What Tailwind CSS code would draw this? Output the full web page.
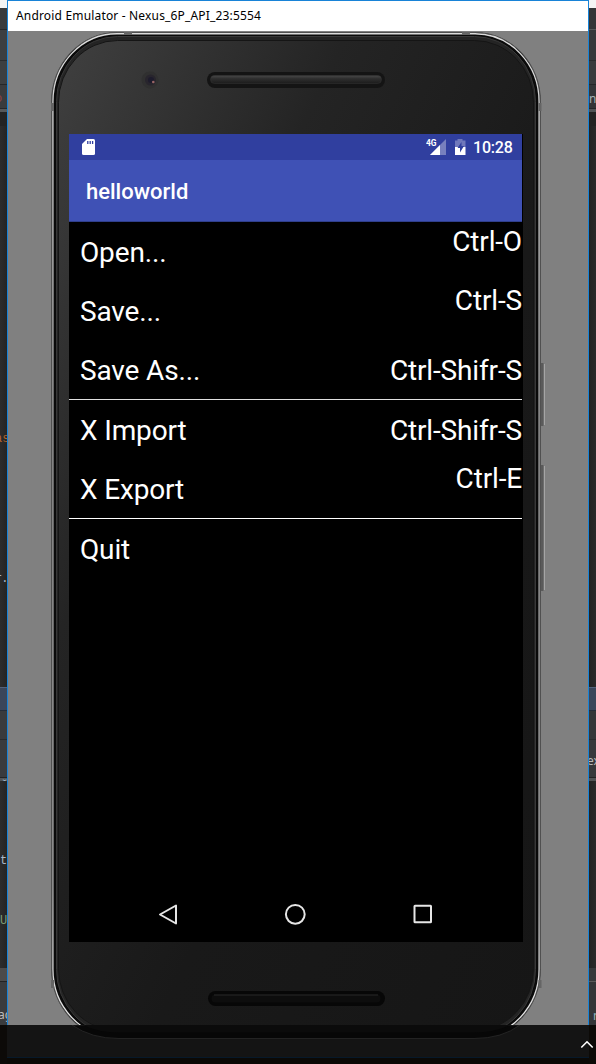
<!DOCTYPE html>
<html lang="en">
<head>
<meta charset="utf-8">
<title>Android Emulator</title>
<script src="https://cdn.jsdelivr.net/npm/@tailwindcss/browser@4"></script>
</head>
<body class="relative flex h-[1064px] w-[596px] overflow-hidden bg-[#2b2b2b] font-['Roboto',sans-serif]">
  <!-- editor strip, left -->
  <aside class="relative w-[7px] shrink-0 overflow-hidden font-['Liberation_Mono',monospace] text-[12px] leading-[14px]">
    <div class="h-2 bg-[#f5f5f5]"></div>
    <div class="h-[22px] border-b border-[#252729] bg-[#393b3d]"></div>
    <div class="h-[31px] border-b border-[#2a2c2e] bg-[#3c3f41]"></div>
    <div class="h-6 border-b border-[#252729] bg-[#3c3f41]"></div>
    <div class="h-6 border-b border-[#252729] bg-[#393b3d]"></div>
    <div class="h-[3px] bg-[#55585a]"></div>
    <div class="h-[14px] bg-[#232323]"></div>
    <div class="h-[561px] bg-gradient-to-r from-[#2c2c2c] to-[#242424]"></div>
    <div class="h-6 border-y border-t-[#52627b] border-b-[#252d39] bg-[#3a465a]"></div>
    <div class="h-[29px] border-b border-[#292b2d] bg-[#393b3d]"></div>
    <div class="h-[38px] border-b border-[#232323] bg-[#393b3d]"></div>
    <div class="h-[3px] bg-[#515658]"></div>
    <div class="h-[187px] bg-gradient-to-r from-[#2c2c2c] to-[#242424]"></div>
    <div class="h-[14px] border-b border-[#222] bg-[#4b4b4b]"></div>
    <div class="h-[82px] bg-[#393b3d]"></div>
    <span class="absolute -left-[5px] top-[92px] text-[#8f4446]">o</span>
    <span class="absolute -left-[5px] top-[432px] text-[#b5652c]">as</span>
    <span class="absolute -left-[5px] top-[572px] tracking-[-1px] text-[#a9b7c6]">r.</span>
    <span class="absolute left-px top-[779px] text-[#a9b7c6]">˘</span>
    <span class="absolute left-0 top-[854px] text-[#a9b7c6]">t</span>
    <span class="absolute left-0 top-[914px] text-[#7d9a72]">U</span>
    <span class="absolute -left-[2px] top-[1008px] font-['Noto_Sans',sans-serif] text-[#bbb]">ag</span>
  </aside>

  <!-- emulator window -->
  <main class="relative flex h-[1058px] w-[582px] shrink-0 flex-col border border-[#1883d7] bg-[#808080]">
    <header class="flex h-[30px] shrink-0 items-center bg-white pl-2 font-['Noto_Sans',sans-serif] text-[12px] text-black"><span class="whitespace-nowrap tracking-[0.17px]">Android Emulator - Nexus_6P_API_23:5554</span></header>
    <svg class="absolute left-[-8px] top-[-1px]" width="596" height="1058" viewBox="0 0 596 1058" fill="none">
      <defs>
        <linearGradient id="face" x1="0" y1="0" x2="1" y2="1" gradientUnits="objectBoundingBox">
          <stop offset="0" stop-color="#404040"/><stop offset=".3" stop-color="#242424"/><stop offset=".6" stop-color="#191919"/><stop offset="1" stop-color="#161616"/>
        </linearGradient>
        <linearGradient id="rim" x1="0" y1="32" x2="0" y2="1039" gradientUnits="userSpaceOnUse">
          <stop offset="0" stop-color="#dcdcdc"/><stop offset=".15" stop-color="#c8c8c8"/><stop offset=".4" stop-color="#a0a0a0"/><stop offset=".85" stop-color="#acacac"/><stop offset="1" stop-color="#eee"/>
        </linearGradient>
        <linearGradient id="bar" x1="0" y1="0" x2="0" y2="1">
          <stop offset="0" stop-color="#484848"/><stop offset=".4" stop-color="#2e2e2e"/><stop offset="1" stop-color="#1c1c1c"/>
        </linearGradient>
      </defs>
      <path d="M541 363h2.500v63H541zM541 465h2.500v126H541z" fill="#5a5a5a"/>
      <path d="M544.500 364v61M544.500 466v124" stroke="#a5a5a5"/>
      <rect x="51.500" y="32.500" width="489" height="1006" rx="65" ry="69" fill="#0a0a0a" stroke="#505050"/>
      <rect x="52.900" y="33.700" width="486.200" height="1003.600" rx="64" ry="68" stroke="url(#rim)" stroke-width="1.400"/>
      <rect x="56.500" y="36.500" width="479" height="998" rx="61" ry="65" fill="#242424" stroke="#383838"/>
      <rect x="58.500" y="40.500" width="475" height="990" rx="59" ry="62" fill="url(#face)" stroke="#151515"/>
      <path d="M124 33.500h8M462 33.500h8M52.500 103v8M540 103v8M52.500 980v8M540 980v8" stroke="#656565" stroke-width="3"/>
      <circle cx="150" cy="80" r="8.500" fill="#303030"/><circle cx="150.500" cy="80" r="5.500" fill="#28252d"/><circle cx="151" cy="80" r="3" fill="#1d1b2c"/><circle cx="153.300" cy="82" r="1.300" fill="#9a6565"/>
      <rect x="207" y="72" width="178" height="16" rx="8" fill="#141414"/>
      <rect x="210.500" y="75.500" width="171" height="8" rx="4" fill="url(#bar)" stroke="#353535" stroke-width=".5"/>
      <rect x="208" y="991" width="177" height="15" rx="7.500" fill="#070707"/>
      <rect x="211.500" y="994.500" width="169" height="8" rx="4" fill="#0d0d0d"/>
      <path d="M214 995h164" stroke="#292929"/>
    </svg>

    <!-- device screen -->
    <section class="relative ml-[61px] mt-[103px] flex h-[808px] w-[454px] flex-col bg-black text-white">
      <div class="flex h-[26px] w-[453px] shrink-0 items-center bg-[#303f9f]">
        <svg class="ml-[13px]" width="13" height="16" viewBox="0 0 13 16"><path d="M5 0h6.500Q13 0 13 1.500v13Q13 16 11.500 16h-10Q0 16 0 14.500V5z" fill="#fff"/><path d="M5.800 2v3M8.200 2v3M10.600 2v3" stroke="#303f9f" stroke-width="1.300"/></svg>
        <svg class="ml-[331px]" width="40" height="18" viewBox="426 138 40 18"><path d="M446 139v16h-16z" fill="#7780be"/><path d="M440 145v10h-10z" fill="#fff"/><text x="426" y="146" fill="#fff" font-family="Roboto" font-weight="700" font-size="8.500" textLength="10.500" lengthAdjust="spacingAndGlyphs">4G</text><path d="M455 140.500h2.500V139h5v1.500h3v6.500h-10.500z" fill="#6f78bb"/><path d="M455 147h10.500v8H455z" fill="#fff"/><path d="M461.500 142l-4 6h2.500v4.500l4-6.500h-2.500z" fill="#303f9f"/></svg>
        <span class="ml-[7px] whitespace-nowrap pt-px text-[16px] font-medium leading-5 tracking-[-0.2px]">10:28</span>
      </div>
      <div class="flex h-[62px] w-[453px] shrink-0 items-center border-b border-[#303f8c] bg-[#3f51b5] pl-[17px] pt-[2px] text-[22px] font-medium">helloworld</div>
      <ul class="w-[453px] flex-1 text-[28px] leading-[33px] tracking-[-0.15px]">
        <li class="flex h-[59px] justify-between pl-[11px]"><span class="pt-[14px]">Open...</span><span class="pt-[3px]">Ctrl-O</span></li>
        <li class="flex h-[59px] justify-between pl-[11px]"><span class="pt-[14px]">Save...</span><span class="pt-[3px]">Ctrl-S</span></li>
        <li class="flex h-[60px] justify-between border-b border-[#e0e0e0] pl-[11px]"><span class="pt-[14px]">Save As...</span><span class="pt-[14px]">Ctrl-Shifr-S</span></li>
        <li class="flex h-[59px] justify-between pl-[11px]"><span class="pt-[14px]">X Import</span><span class="pt-[14px]">Ctrl-Shifr-S</span></li>
        <li class="flex h-[60px] justify-between border-b border-white pl-[11px]"><span class="pt-[14px]">X Export</span><span class="pt-[3px]">Ctrl-E</span></li>
        <li class="flex h-[59px] pl-[11px]"><span class="pt-[14px]">Quit</span></li>
      </ul>
      <nav class="flex h-[56px] shrink-0">
        <svg width="454" height="56" viewBox="69 886 454 56" fill="none" stroke="#e6e6e6" stroke-width="2"><path d="M176 905.500v18l-16-9z" stroke-linejoin="round"/><circle cx="295.300" cy="914.300" r="9.400"/><rect x="414.500" y="905.800" width="16.500" height="16.500" rx=".5"/></svg>
      </nav>
    </section>
  </main>

  <!-- editor strip, right -->
  <aside class="relative w-[7px] shrink-0 overflow-hidden font-['Noto_Sans',sans-serif] text-[12px] leading-[14px]">
    <div class="h-2 bg-[#f5f5f5]"></div>
    <div class="h-[22px] border-b border-[#55585a] bg-[#343638]"></div>
    <div class="h-[31px] border-b border-[#2a2c2e] bg-[#37393b]"></div>
    <div class="h-6 border-b border-[#252729] bg-[#393b3d]"></div>
    <div class="h-6 border-b border-[#252729] bg-[#343638]"></div>
    <div class="h-[3px] bg-[#505355]"></div>
    <div class="h-[14px] bg-[#232323]"></div>
    <div class="h-[561px] bg-gradient-to-r from-[#222] to-[#2a2a2a]"></div>
    <div class="h-6 border-y border-t-[#52627b] border-b-[#252d39] bg-[#3a465a]"></div>
    <div class="h-[29px] border-b border-[#292b2d] bg-[#343638]"></div>
    <div class="h-[38px] border-b border-[#232323] bg-[#37393b]"></div>
    <div class="h-[3px] bg-[#515354]"></div>
    <div class="h-[187px] bg-gradient-to-r from-[#222] to-[#2a2a2a]"></div>
    <div class="h-[14px] border-b border-[#5a5a5a] bg-[#37393b]"></div>
    <div class="h-[82px] bg-[#343638]"></div>
    <span class="absolute left-0 top-[92px] text-[#a4b0b5]">n</span>
    <span class="absolute -left-[2px] top-[754px] text-[#bbb]">ex</span>
    <span class="absolute left-[4px] top-[1009px] text-[#8fb0b5]">n</span>
  </aside>

  <!-- taskbar -->
  <footer class="absolute inset-x-0 bottom-0 flex h-[39px] items-center justify-end bg-[#080502]/90">
    <div class="absolute left-[7px] top-0 h-[33px] w-[582px] border-b border-[#07192a] bg-[#141414]"></div>
    <svg class="absolute left-0 top-0" width="596" height="33" viewBox="0 1025 596 33" fill="none"><path d="M72 1025Q91 1038.500 119 1038.500H474Q502 1038.500 520 1025z" fill="#070707" stroke="#292929" stroke-width=".8"/><path d="M83 1025Q98 1032.500 119 1032.500H474Q495 1032.500 510 1025z" fill="#0b0b0b"/></svg>
    <svg class="relative mr-[2px]" width="14" height="9" viewBox="0 0 14 9" fill="none" stroke="#fff" stroke-width="1.600"><path d="M1.300 7.500L7 1.800l5.700 5.700"/></svg>
  </footer>
</body>
</html>
